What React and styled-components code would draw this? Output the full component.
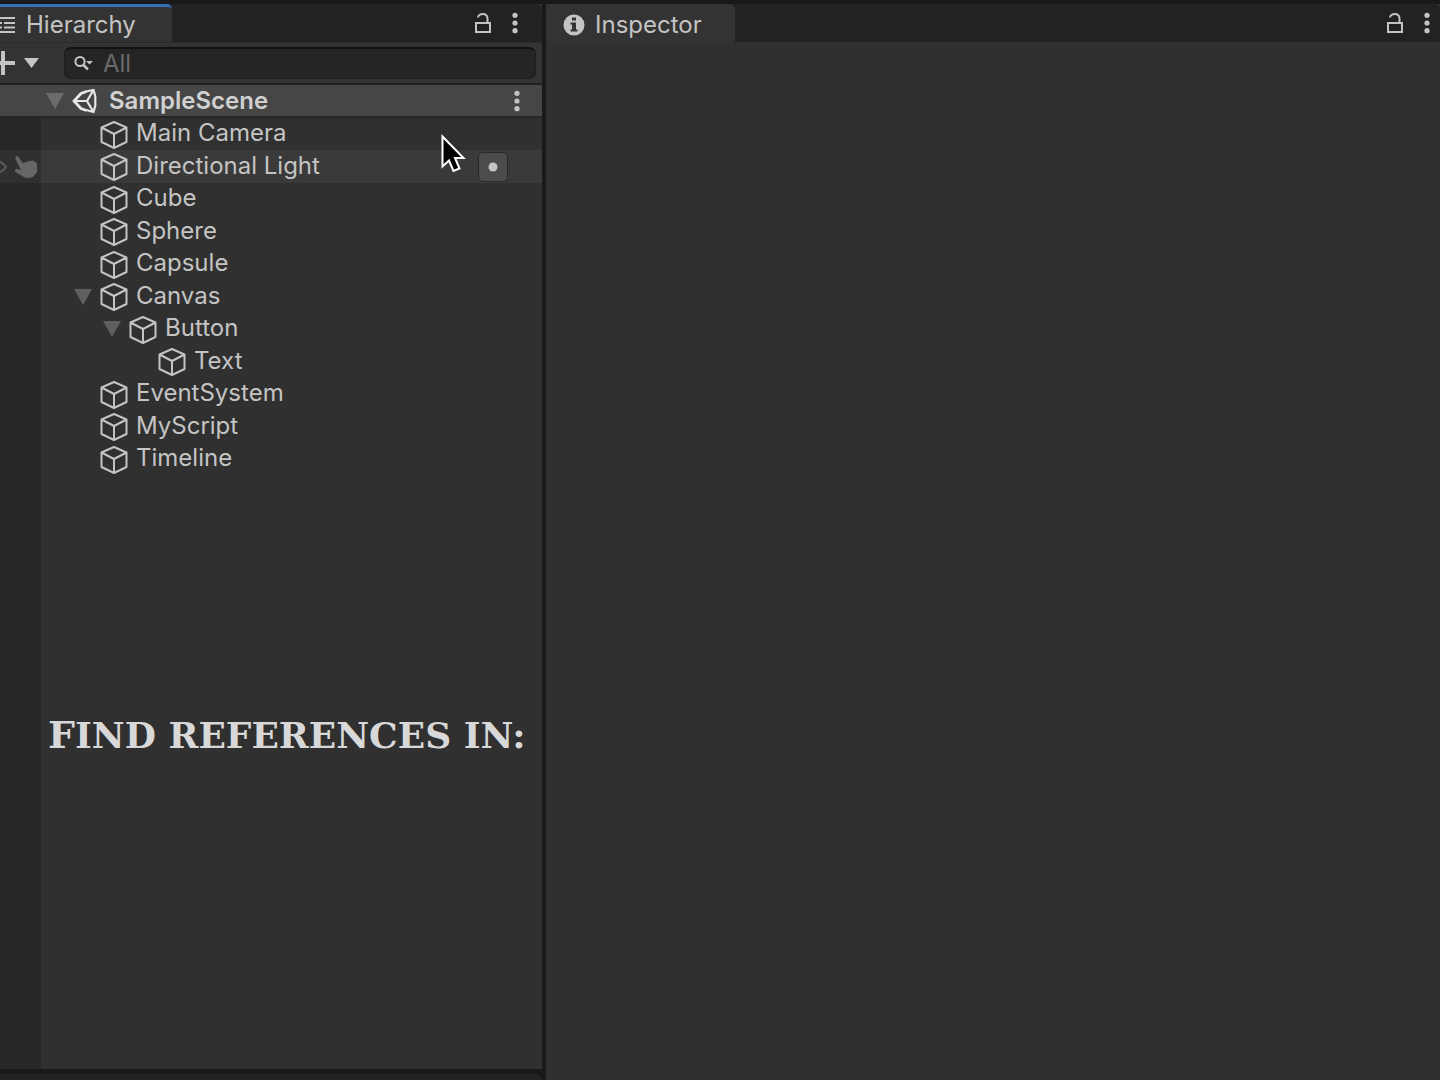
import styled, { createGlobalStyle } from "styled-components";

const GlobalStyle = createGlobalStyle`
  * {
    box-sizing: border-box;
  }

  body {
    margin: 0;
    background: #191919;
    color: #c4c4c4;
    font-family: Inter, "Liberation Sans", sans-serif;
    font-size: 24px;
    line-height: 32px;
    overflow: hidden;
  }

  button {
    display: flex;
    align-items: center;
    padding: 0;
    border: 0;
    background: none;
    color: inherit;
    font: inherit;
  }

  ul {
    list-style: none;
    margin: 0;
    padding: 0;
  }

  svg {
    display: block;
    flex: none;
  }
`;

const Editor = styled.div`
  display: grid;
  grid-template-columns: 542px 1fr;
  column-gap: 4px;
  height: 100vh;
  padding-top: 4px;
`;

const Column = styled.div`
  display: flex;
  flex-direction: column;
  min-width: 0;
  overflow: hidden;
`;

const Panel = styled.section`
  display: flex;
  flex-direction: column;
  flex: 1;
  min-height: 0;
  background: #303030;
`;

const TabBar = styled.header`
  display: flex;
  justify-content: space-between;
  height: 38px;
  background: #222222;
  border-top-right-radius: 6px;
`;

const Tab = styled.button`
  && {
    gap: ${(props) => props.$gap};
    padding: ${(props) => props.$padding};
    background: #333333;
    border-radius: 0 5px 0 0;
    border-top: 3px solid ${(props) => (props.$active ? "#3470b8" : "#333333")};
  }
`;

const TabActions = styled.div`
  display: flex;
  align-items: center;
  gap: 20px;
  padding-right: ${(props) => props.$end};
`;

const Toolbar = styled.div`
  display: flex;
  align-items: center;
  justify-content: space-between;
  height: 43px;
  padding-right: 6px;
  background: #333333;
  border-bottom: 2px solid #212121;
  border-top: 1px solid #2c2c2c;
`;

const AddButton = styled.button`
  && {
    gap: 8px;
    margin-left: -8px;
  }
`;

const Search = styled.label`
  display: flex;
  align-items: center;
  gap: 9px;
  width: 472px;
  height: 32px;
  padding-left: 9px;
  background: #252525;
  border: 1px solid #1e1e1e;
  border-top: 2px solid #121212;
  border-radius: 7px;
`;

const SearchInput = styled.input`
  flex: 1;
  min-width: 0;
  padding: 0;
  border: 0;
  outline: 0;
  background: none;
  color: #c4c4c4;
  font: inherit;

  &::placeholder {
    color: #6a6a6a;
    opacity: 1;
  }
`;

const SceneRow = styled.div`
  display: flex;
  align-items: center;
  height: 33px;
  padding: 0 22px 0 46px;
  background: #464646;
  border-bottom: 2px solid #262626;
  font-weight: 600;
  color: #d0d0d0;
`;

const SceneName = styled.span`
  flex: 1;
  margin-left: 11px;
`;

const Tree = styled.div`
  flex: 1;
  background: linear-gradient(to right, #272727 41px, #303030 41px);
`;

const Row = styled.li`
  display: flex;
  height: 32px;
  padding-right: 34px;
  background: ${(props) => (props.$hovered ? "#3a3a3a" : "none")};

  &:nth-child(even) {
    height: 33px;
  }
`;

const Gutter = styled.div`
  display: flex;
  align-items: center;
  gap: 6px;
  width: 41px;
  margin-right: ${(props) => props.$indent}px;
  background: ${(props) => (props.$hovered ? "#303030" : "none")};

  svg:first-child {
    margin-left: -16px;
  }
`;

const Foldout = styled.button`
  && {
    width: 26px;
  }
`;

const Item = styled.button`
  && {
    flex: 1;
    gap: 8px;
    padding-bottom: 2px;
    text-align: left;
  }

  svg {
    margin-top: 3px;
  }
`;

const PickButton = styled.button`
  && {
    justify-content: center;
    align-self: center;
    width: 30px;
    height: 30px;
    background: #4c4c4c;
    border: 1px solid #282828;
    border-radius: 5px;
  }
`;

const Caption = styled.h1`
  margin: 236px 0 0 48px;
  font-family: "DejaVu Serif", serif;
  font-size: 36px;
  font-weight: 700;
  line-height: 48px;
  text-transform: uppercase;
  white-space: nowrap;
  color: #d8d8d8;

  &::first-letter {
    font-size: 38px;
  }
`;

const NextPanel = styled.div`
  height: 6px;
  margin-top: 5px;
  background: #222222;
  border-top-right-radius: 6px;
`;

const Pointer = styled.div`
  position: absolute;
  left: 441px;
  top: 134px;
`;

const objects = [
  { name: "Main Camera", depth: 0 },
  { name: "Directional Light", depth: 0, hovered: true },
  { name: "Cube", depth: 0 },
  { name: "Sphere", depth: 0 },
  { name: "Capsule", depth: 0 },
  { name: "Canvas", depth: 0, open: true },
  { name: "Button", depth: 1, open: true },
  { name: "Text", depth: 2 },
  { name: "EventSystem", depth: 0 },
  { name: "MyScript", depth: 0 },
  { name: "Timeline", depth: 0 },
];

function ListIcon() {
  return (
    <svg width="16" height="18" viewBox="0 0 16 18" stroke="#c4c4c4" strokeWidth="2">
      <path d="M0 2H15M4 7H15M4 11.500H15M0 16H15M0 7H2M0 11.500H2" />
    </svg>
  );
}

function LockIcon() {
  return (
    <svg width="18" height="22" viewBox="0 0 18 22" fill="none" stroke="#c4c4c4" strokeWidth="2">
      <rect x="2" y="11" width="14" height="9" />
      <path d="M4 5.500C4.500 1.200 13.500 0 13.500 6.500V11" />
    </svg>
  );
}

function DotsIcon() {
  return (
    <svg width="6" height="22" viewBox="0 0 6 22" fill="#c4c4c4">
      <circle cx="3" cy="3.300" r="2.600" />
      <circle cx="3" cy="11" r="2.600" />
      <circle cx="3" cy="18.700" r="2.600" />
    </svg>
  );
}

function InfoIcon() {
  return (
    <svg width="22" height="22" viewBox="0 0 22 22">
      <circle cx="11" cy="11" r="10.500" fill="#c4c4c4" />
      <path d="M9 3.500H13V6.500H9ZM7.500 8.500H13V15.500H14.500V17.500H7.500V15.500H9V10.500H7.500Z" fill="#333333" />
    </svg>
  );
}

function PlusIcon() {
  return (
    <svg width="24" height="26" viewBox="0 0 24 26" stroke="#c4c4c4" strokeWidth="4">
      <path d="M0 13H23M11 1V25" />
    </svg>
  );
}

function SearchIcon() {
  return (
    <svg width="20" height="18" viewBox="0 0 20 18" fill="none" stroke="#c4c4c4" strokeWidth="2">
      <circle cx="6" cy="6.500" r="4.600" />
      <path d="M9.500 10L14 14.500" strokeWidth="2.500" />
      <path d="M12 6H19L15.500 9.500Z" fill="#c4c4c4" stroke="none" />
    </svg>
  );
}

function Triangle({ width, height, color }) {
  return (
    <svg width={width} height={height} viewBox="0 0 18 16" preserveAspectRatio="none" fill={color}>
      <path d="M0 0H18L9 16Z" />
    </svg>
  );
}

function UnityIcon() {
  return (
    <svg width="26" height="26" viewBox="0 0 26 26" fill="none" stroke="#e8e8e8" strokeWidth="2.200">
      <path d="M14 3.500L21.500 2L23.500 9M23.500 17L21.500 24L14 22M2 13H15M15 13L21.500 2M15 13L21.500 24M23.300 8V18" />
      <path d="M14.500 3.500L9 5.500L2 13L9 20.500L14.500 22.500" strokeWidth="2.800" />
    </svg>
  );
}

function CubeIcon() {
  return (
    <svg width="28" height="30" viewBox="0 0 28 30" fill="none" stroke="#c4c4c4" strokeWidth="2" strokeLinejoin="round">
      <path d="M14 2L26.500 7.500V22L14 28L1.500 22V7.500ZM1.500 7.500L14 14L26.500 7.500M14 14V28" />
    </svg>
  );
}

function EyeIcon() {
  return (
    <svg width="24" height="16" viewBox="0 0 24 16" fill="none" stroke="#5c5c5c" strokeWidth="2">
      <path d="M1 8C6 0 17 0 22 8C17 16 6 16 1 8Z" />
    </svg>
  );
}

function HandIcon() {
  return (
    <svg width="24" height="24" viewBox="0 0 24 24" fill="#666666">
      <path d="M1.500 1.500C2.500 0.500 4 1 4.500 2L9 8.500C10 7 11.500 7 12.500 7.500C13.500 5.500 15.500 6 16.500 6.500C17.500 5 20 5 20.500 7C22.500 6.500 23 8.500 23 10V17L19 22C15 23.500 12 23 10 22L1.500 17C0 15.500 1.500 13.500 3.500 14L7 15L1.500 4Z" />
    </svg>
  );
}

function PointerIcon() {
  return (
    <svg width="26" height="42" viewBox="0 0 26 42">
      <path
        d="M1.500 2.500V32.500L8 26.500L12.500 37L18.500 34.500L14 24H22.500Z"
        fill="#000000"
        stroke="#ffffff"
        strokeWidth="2"
      />
    </svg>
  );
}

function TreeRow({ name, depth, open, hovered }) {
  return (
    <Row $hovered={hovered}>
      <Gutter $indent={(open ? 33 : 59) + depth * 29} $hovered={hovered}>
        {hovered && (
          <>
            <EyeIcon />
            <HandIcon />
          </>
        )}
      </Gutter>
      {open && (
        <Foldout aria-label={`Collapse ${name}`}>
          <Triangle width={18} height={16} color="#5f5f5f" />
        </Foldout>
      )}
      <Item>
        <CubeIcon />
        {name}
      </Item>
      {hovered && (
        <PickButton aria-label="Find references">
          <svg width="10" height="10" viewBox="0 0 10 10" fill="#c4c4c4">
            <circle cx="5" cy="5" r="4.500" />
          </svg>
        </PickButton>
      )}
    </Row>
  );
}

function PanelActions({ end }) {
  return (
    <TabActions $end={end}>
      <button aria-label="Lock">
        <LockIcon />
      </button>
      <button aria-label="Options">
        <DotsIcon />
      </button>
    </TabActions>
  );
}

function Hierarchy() {
  return (
    <Panel>
      <TabBar>
        <Tab $active $gap="10px" $padding="0 36px 0 0">
          <ListIcon />
          Hierarchy
        </Tab>
        <PanelActions end="24px" />
      </TabBar>
      <Toolbar>
        <AddButton aria-label="Add object">
          <PlusIcon />
          <Triangle width={15} height={10} color="#c4c4c4" />
        </AddButton>
        <Search>
          <SearchIcon />
          <SearchInput type="text" placeholder="All" aria-label="Search" />
        </Search>
      </Toolbar>
      <SceneRow>
        <Foldout aria-label="Collapse SampleScene">
          <Triangle width={18} height={16} color="#6b6b6b" />
        </Foldout>
        <UnityIcon />
        <SceneName>SampleScene</SceneName>
        <button aria-label="Scene options">
          <DotsIcon />
        </button>
      </SceneRow>
      <Tree>
        <ul>
          {objects.map((object) => (
            <TreeRow key={object.name} {...object} />
          ))}
        </ul>
        <Caption>Find references in:</Caption>
      </Tree>
    </Panel>
  );
}

function Inspector() {
  return (
    <Panel>
      <TabBar>
        <Tab $gap="10px" $padding="0 33px 0 17px">
          <InfoIcon />
          Inspector
        </Tab>
        <PanelActions end="10px" />
      </TabBar>
    </Panel>
  );
}

function App() {
  return (
    <>
      <GlobalStyle />
      <Editor>
        <Column>
          <Hierarchy />
          <NextPanel />
        </Column>
        <Column>
          <Inspector />
        </Column>
      </Editor>
      <Pointer>
        <PointerIcon />
      </Pointer>
    </>
  );
}

export default App;
